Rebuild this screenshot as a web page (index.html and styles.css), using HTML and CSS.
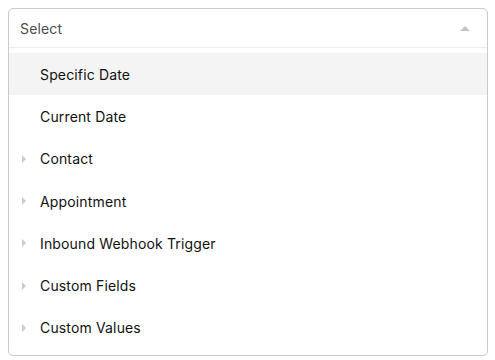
FILE: index.html
```html
<!DOCTYPE html>
<html lang="en">
<head>
  <meta charset="UTF-8">
  <title>Select</title>
  <link rel="stylesheet" href="styles.css">
</head>
<body>
  <div class="select-box">
    <div class="select-head">
      <span class="select-label">Select</span>
      <span class="arrow-up"></span>
    </div>
    <ul class="option-list">
      <li class="option active"><span class="caret-slot"></span>Specific Date</li>
      <li class="option"><span class="caret-slot"></span>Current Date</li>
      <li class="option"><span class="caret-slot"><span class="caret"></span></span>Contact</li>
      <li class="option"><span class="caret-slot"><span class="caret"></span></span>Appointment</li>
      <li class="option"><span class="caret-slot"><span class="caret"></span></span>Inbound Webhook Trigger</li>
      <li class="option"><span class="caret-slot"><span class="caret"></span></span>Custom Fields</li>
      <li class="option"><span class="caret-slot"><span class="caret"></span></span>Custom Values</li>
    </ul>
  </div>
</body>
</html>
```

FILE: styles.css
```css
body {
  margin: 0;
  padding: 8px;
  background: #fff;
  font-family: Inter, "Noto Sans", sans-serif;
  font-size: 14px;
  letter-spacing: 0.15px;
  color: #111;
}

.select-box {
  width: 478px;
  border: 1px solid #c9c9c9;
  border-radius: 5px;
  background: #fff;
  padding-bottom: 6px;
}

.select-head {
  display: flex;
  align-items: center;
  justify-content: space-between;
  height: 38px;
  padding: 0 17px 0 11px;
  border-bottom: 1px solid #ececec;
}
.select-label {
  color: #4d4d4d;
  font-size: 14px;
}
.arrow-up {
  width: 0;
  height: 0;
  border-left: 5px solid transparent;
  border-right: 5px solid transparent;
  border-bottom: 5px solid #c4c4c4;
  margin-top: 1px;
}

.option-list {
  list-style: none;
  margin: 5px 0 0;
  padding: 0;
}
.option {
  display: flex;
  align-items: center;
  height: 42.3px;
  color: #111;
}
.option.active {
  background: #f4f4f4;
}
.caret-slot {
  display: flex;
  align-items: center;
  width: 31px;
  padding-left: 13px;
  box-sizing: border-box;
  flex-shrink: 0;
}
.caret {
  width: 0;
  height: 0;
  border-top: 4px solid transparent;
  border-bottom: 4px solid transparent;
  border-left: 4px solid #cbcbcb;
}
```
